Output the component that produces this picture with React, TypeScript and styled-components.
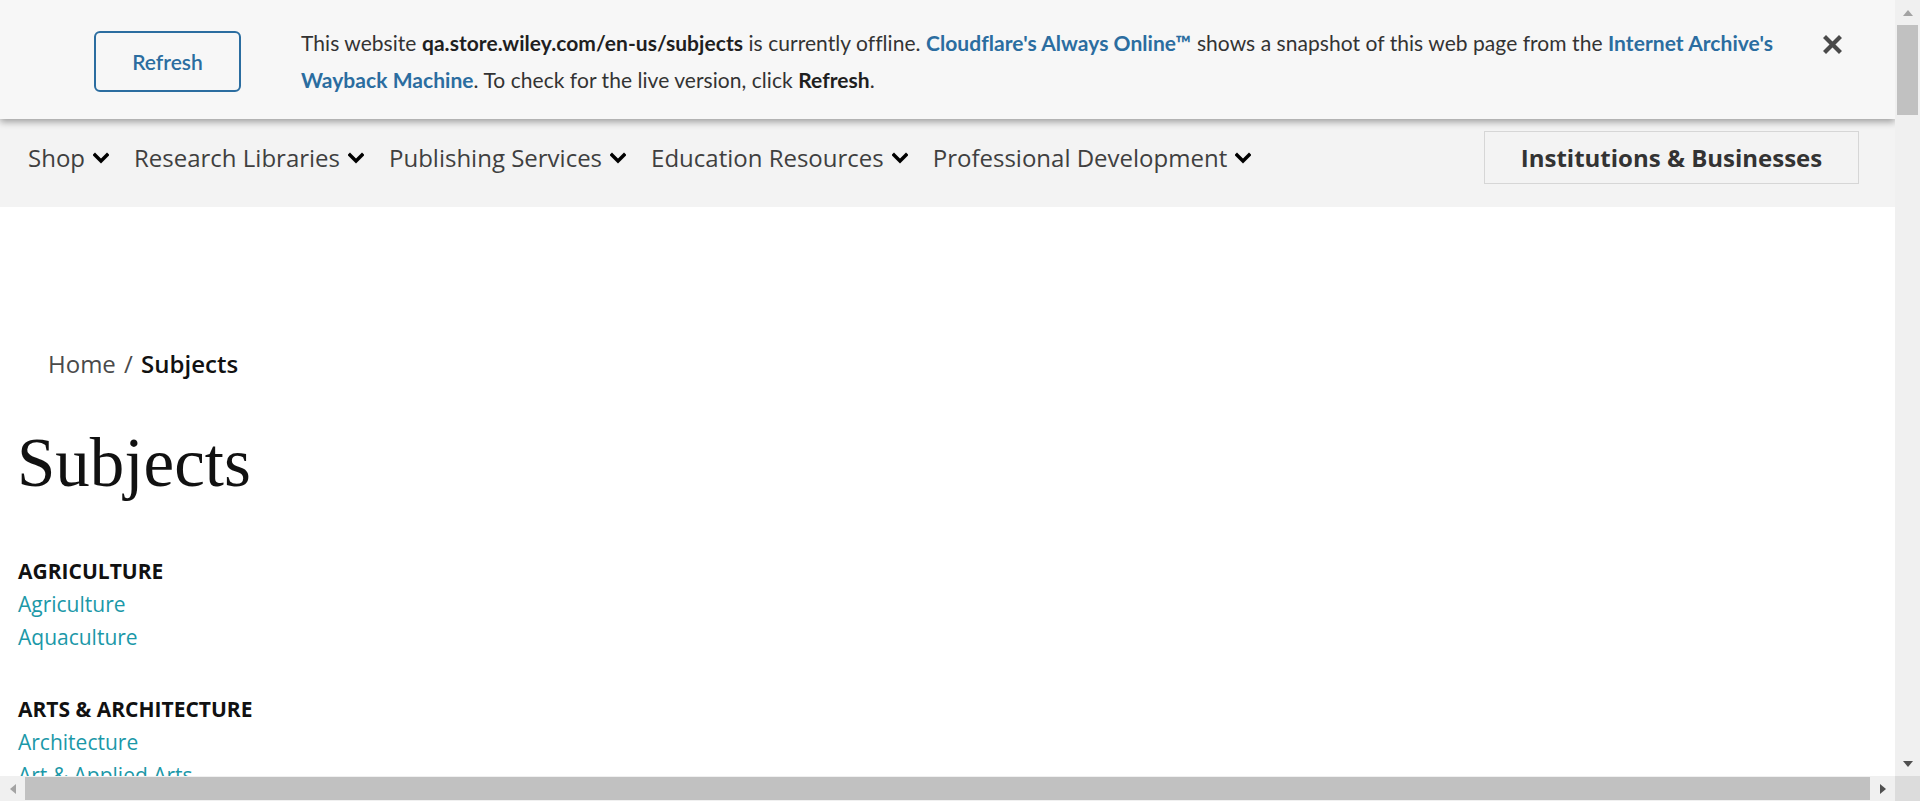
import React from "react";
import styled, { createGlobalStyle } from "styled-components";

const GlobalStyle = createGlobalStyle`
  html, body { margin: 0; padding: 0; overflow: hidden; background: #ffffff; }
  * { box-sizing: border-box; }
`;

const Frame = styled.div`
  width: 1920px;
  height: 801px;
  display: grid;
  grid-template-columns: 1fr 25px;
  grid-template-rows: 1fr 25px;
  overflow: hidden;
`;

const Viewport = styled.div`
  overflow: hidden;
  background: #ffffff;
  font-family: "Open Sans", "Noto Sans", sans-serif;
`;

/* ---------- Cloudflare banner ---------- */
const Banner = styled.div`
  position: relative;
  z-index: 2;
  height: 119px;
  background: #f7f7f7;
  box-shadow: 0 3px 7px rgba(0, 0, 0, 0.35);
  display: flex;
  align-items: flex-start;
  padding: 24px 0 0 94px;
  font-family: "Lato", "Liberation Sans", sans-serif;
`;

const RefreshButton = styled.button`
  flex: 0 0 147px;
  height: 61px;
  margin-top: 7px;
  border: 2px solid #2b6da0;
  border-radius: 6px;
  background: transparent;
  color: #2b6da0;
  font-family: inherit;
  font-size: 21px;
  font-weight: 600;
  cursor: pointer;
`;

const BannerText = styled.p`
  flex: 0 0 1490px;
  margin: 0 0 0 60px;
  font-size: 21px;
  line-height: 37px;
  letter-spacing: 0.05px;
  color: #333333;
`;

const Strong = styled.b`
  font-weight: 700;
  color: #1f1f1f;
`;

const BannerLink = styled.a`
  color: #2b6da0;
  font-weight: 700;
  text-decoration: none;
`;

const CloseButton = styled.button`
  margin: 10px 0 0 31px;
  width: 21px;
  height: 21px;
  padding: 0;
  border: 0;
  background: transparent;
  display: flex;
  cursor: pointer;
`;

/* ---------- Navigation ---------- */
const Nav = styled.nav`
  height: 88px;
  background: #f3f3f3;
  display: flex;
  align-items: flex-start;
  padding: 12px 36px 0 28px;
`;

const NavList = styled.ul`
  list-style: none;
  margin: 0;
  padding: 0;
  height: 53px;
  display: flex;
  align-items: center;
  gap: 25px;
`;

const NavItem = styled.li`
  display: flex;
  align-items: center;
  gap: 8px;
  font-size: 24px;
  color: #3f3f3f;
`;

const InstitutionsButton = styled.a`
  margin-left: auto;
  width: 375px;
  height: 53px;
  border: 1px solid #d6d6d6;
  display: flex;
  align-items: center;
  justify-content: center;
  font-size: 24px;
  font-weight: 700;
  color: #333333;
  text-decoration: none;
`;

/* ---------- Main content ---------- */
const Main = styled.main`
  padding: 139px 0 0 18px;
`;

const Breadcrumb = styled.div`
  margin-left: 30px;
  font-size: 24px;
  line-height: 36px;
  color: #4a4a4a;
`;

const Sep = styled.span`
  margin: 0 2px;
`;

const Crumb = styled.span`
  color: #111111;
  font-weight: 600;
`;

const Title = styled.h1`
  margin: 40px 0 0 -1px;
  font-family: "Liberation Serif", "Times New Roman", serif;
  font-weight: 400;
  font-size: 69px;
  line-height: 82px;
  color: #111111;
`;

const Group = styled.section`
  margin-top: 50px;
  & + & { margin-top: 38px; }
`;

const GroupTitle = styled.h2`
  margin: 0;
  font-size: 21px;
  line-height: 34px;
  font-weight: 700;
  color: #111111;
`;

const SubjectLink = styled.a`
  display: block;
  font-size: 21px;
  line-height: 33px;
  color: #1b98a8;
  text-decoration: none;
`;

/* ---------- Scrollbars ---------- */
const VScroll = styled.div`
  background: #f0f0f0;
  display: flex;
  flex-direction: column;
`;

const HScroll = styled.div`
  background: #f0f0f0;
  display: flex;
`;

const Corner = styled.div`
  background: #dcdcdc;
`;

const ArrowBox = styled.div`
  flex: 0 0 25px;
  display: flex;
  align-items: center;
  justify-content: center;
`;

const Track = styled.div<{ $vertical?: boolean }>`
  flex: 1;
  display: flex;
  flex-direction: ${(p) => (p.$vertical ? "column" : "row")};
  padding: ${(p) => (p.$vertical ? "0 2px" : "1px 0")};
`;

const Thumb = styled.div<{ $vertical?: boolean }>`
  background: #c1c1c1;
  ${(p) => (p.$vertical ? "height: 90px;" : "width: 1845px;")}
`;

const Tri = styled.span<{ $dir: "up" | "down" | "left" | "right"; $active?: boolean }>`
  width: 0;
  height: 0;
  ${(p) => {
    const c = p.$active ? "#505050" : "#a3a3a3";
    switch (p.$dir) {
      case "up":
        return `border-left: 5.5px solid transparent; border-right: 5.5px solid transparent; border-bottom: 6px solid ${c};`;
      case "down":
        return `border-left: 5.5px solid transparent; border-right: 5.5px solid transparent; border-top: 6px solid ${c};`;
      case "left":
        return `border-top: 5.5px solid transparent; border-bottom: 5.5px solid transparent; border-right: 6px solid ${c};`;
      default:
        return `border-top: 5.5px solid transparent; border-bottom: 5.5px solid transparent; border-left: 6px solid ${c};`;
    }
  }}
`;

const Chevron = () => (
  <svg width="16" height="12" viewBox="0 0 16 12" aria-hidden="true">
    <path d="M2 3 L8 9 L14 3" fill="none" stroke="#000" strokeWidth="3.4" strokeLinecap="square" strokeLinejoin="miter" />
  </svg>
);

const CloseIcon = () => (
  <svg width="21" height="21" viewBox="0 0 21 21" aria-hidden="true">
    <path d="M4 4 L17 17 M17 4 L4 17" stroke="#4a4a4a" strokeWidth="4.2" strokeLinecap="square" />
  </svg>
);

const navItems = ["Shop", "Research Libraries", "Publishing Services", "Education Resources", "Professional Development"];

const groups = [
  { title: "AGRICULTURE", links: ["Agriculture", "Aquaculture"] },
  { title: "ARTS & ARCHITECTURE", links: ["Architecture", "Art & Applied Arts", "Art History", "Design"] },
];

export default function App() {
  return (
    <>
      <GlobalStyle />
      <Frame>
        <Viewport>
          <Banner>
            <RefreshButton>Refresh</RefreshButton>
            <BannerText>
              This website <Strong>qa.store.wiley.com/en-us/subjects</Strong> is currently offline.{" "}
              <BannerLink href="#">Cloudflare's Always Online™</BannerLink> shows a snapshot of this web page from the{" "}
              <BannerLink href="#">Internet Archive's</BannerLink>
              <br />
              <BannerLink href="#">Wayback Machine</BannerLink>. To check for the live version, click <Strong>Refresh</Strong>.
            </BannerText>
            <CloseButton aria-label="Close">
              <CloseIcon />
            </CloseButton>
          </Banner>
          <Nav>
            <NavList>
              {navItems.map((n) => (
                <NavItem key={n}>
                  {n}
                  <Chevron />
                </NavItem>
              ))}
            </NavList>
            <InstitutionsButton href="#">Institutions &amp; Businesses</InstitutionsButton>
          </Nav>
          <Main>
            <Breadcrumb>
              Home<Sep> / </Sep><Crumb>Subjects</Crumb>
            </Breadcrumb>
            <Title>Subjects</Title>
            {groups.map((g) => (
              <Group key={g.title}>
                <GroupTitle>{g.title}</GroupTitle>
                {g.links.map((l) => (
                  <SubjectLink key={l} href="#">
                    {l}
                  </SubjectLink>
                ))}
              </Group>
            ))}
          </Main>
        </Viewport>
        <VScroll>
          <ArrowBox>
            <Tri $dir="up" />
          </ArrowBox>
          <Track $vertical>
            <Thumb $vertical />
          </Track>
          <ArrowBox>
            <Tri $dir="down" $active />
          </ArrowBox>
        </VScroll>
        <HScroll>
          <ArrowBox>
            <Tri $dir="left" />
          </ArrowBox>
          <Track>
            <Thumb />
          </Track>
          <ArrowBox>
            <Tri $dir="right" $active />
          </ArrowBox>
        </HScroll>
        <Corner />
      </Frame>
    </>
  );
}
